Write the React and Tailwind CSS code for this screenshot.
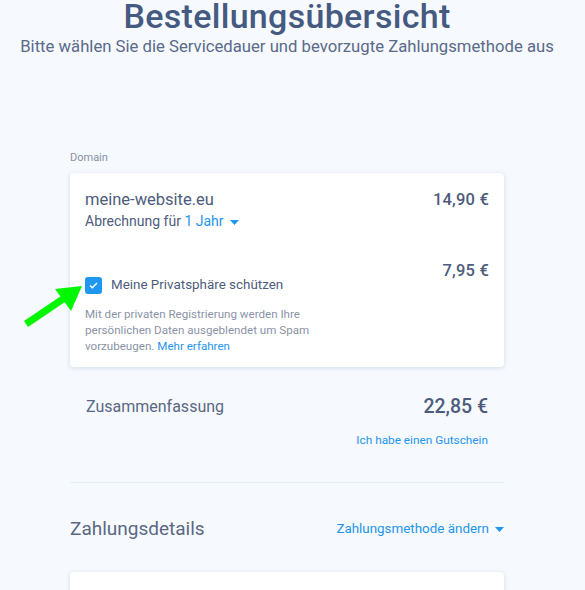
import React from "react";

function Caret() {
  return (
    <svg width="9" height="5" viewBox="0 0 9 5" className="inline-block ml-[6px] align-middle">
      <path d="M0 0 L9 0 L4.5 5 Z" fill="currentColor" />
    </svg>
  );
}

export default function App() {
  return (
    <div className="h-[590px] bg-[#f6f9fd] font-['Roboto',sans-serif] text-[#4a5a7c] overflow-hidden relative">
      <div className="w-[574px]">
        <div className="text-center">
          <h1 className="text-[34px] leading-[40px] font-medium text-[#455a80] mt-[-4px] tracking-[0.3px]">Bestellungsübersicht</h1>
          <p className="text-[16.7px] leading-[20px] text-[#5a6a8a] mt-[1px]">Bitte wählen Sie die Servicedauer und bevorzugte Zahlungsmethode aus</p>
        </div>

        <div className="w-[434px] mx-auto mt-[94px]">
          <div className="text-[11px] leading-[14px] text-[#8792a6]">Domain</div>
          <div className="mt-[8px] bg-white rounded-[4px] shadow-[0_1px_4px_rgba(140,170,210,0.35)] px-[15px] pt-[17px] pb-[13px]">
            <div className="flex justify-between items-start">
              <div>
                <div className="text-[16.5px] leading-[20px] text-[#4d5c7c]">meine-website.eu</div>
                <div className="text-[14px] leading-[18px] mt-[2px] text-[#4d5c7c]">
                  Abrechnung für <span className="text-[#1f95ec]">1 Jahr<Caret /></span>
                </div>
              </div>
              <div className="text-[16.5px] leading-[20px] font-medium text-[#4d5c7c] tracking-[0.2px]">14,90 €</div>
            </div>

            <div className="flex justify-between items-start mt-[31px]">
              <div>
                <div className="flex items-center mt-[15px]">
                  <span className="w-[17px] h-[17px] rounded-[3px] bg-[#1d97ef] flex items-center justify-center">
                    <svg width="9" height="7" viewBox="0 0 9 7">
                      <path d="M1 3.6 L3.3 5.8 L8 1" fill="none" stroke="white" strokeWidth="1.4" />
                    </svg>
                  </span>
                  <span className="ml-[9px] text-[13.4px] leading-[18px] text-[#4d5c7c]">Meine Privatsphäre schützen</span>
                </div>
                <p className="mt-[12px] w-[236px] text-[11.6px] leading-[16px] text-[#8a93a6]">
                  Mit der privaten Registrierung werden Ihre persönlichen Daten ausgeblendet um Spam vorzubeugen. <span className="text-[#1f95ec]">Mehr erfahren</span>
                </p>
              </div>
              <div className="text-[16.5px] leading-[20px] font-medium text-[#4d5c7c] tracking-[0.2px]">7,95 €</div>
            </div>
          </div>

          <div className="px-[16px] mt-[27px]">
            <div className="flex justify-between items-center">
              <div className="text-[16px] leading-[26px] text-[#5a6884]">Zusammenfassung</div>
              <div className="text-[19.5px] leading-[26px] font-medium text-[#4d5c7c]">22,85 €</div>
            </div>
            <div className="text-right text-[11.8px] leading-[14px] text-[#1f95ec] mt-[13px]">Ich habe einen Gutschein</div>
          </div>

          <div className="h-px bg-[#e3eef8] mt-[35px]" />

          <div className="flex justify-between items-center mt-[33px]">
            <div className="text-[19px] leading-[26px] text-[#5a6884]">Zahlungsdetails</div>
            <div className="text-[13.4px] leading-[18px] text-[#1f95ec]">Zahlungsmethode ändern<Caret /></div>
          </div>

          <div className="mt-[30px] h-[40px] bg-white rounded-t-[4px] shadow-[0_1px_4px_rgba(140,170,210,0.35)]" />
        </div>
      </div>

      <svg className="absolute left-[22px] top-[282px]" width="66" height="48" viewBox="0 0 66 48">
        <path d="M4 42 L44 15" stroke="#00f700" strokeWidth="7" strokeLinecap="butt" />
        <path d="M60 4 L33 7 L49 29 Z" fill="#00f700" />
      </svg>
    </div>
  );
}
